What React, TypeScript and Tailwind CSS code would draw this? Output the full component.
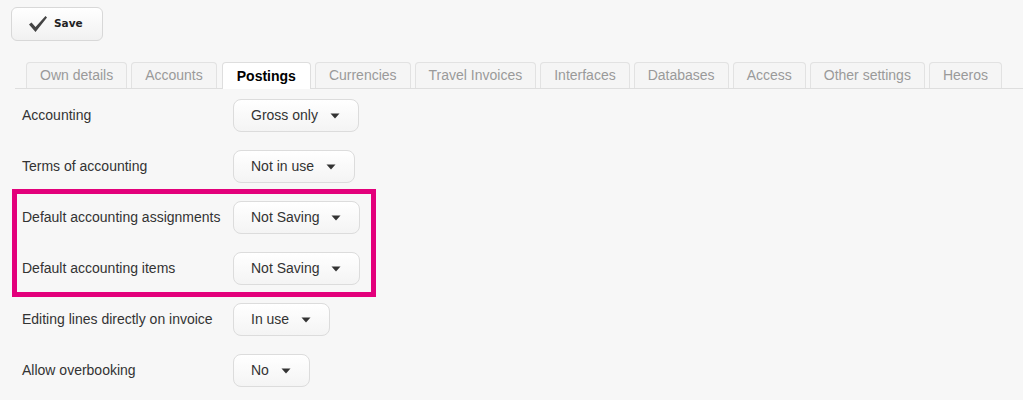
import React from "react";

interface Setting {
  label: string;
  value: string;
}

const tabs = [
  "Own details",
  "Accounts",
  "Postings",
  "Currencies",
  "Travel Invoices",
  "Interfaces",
  "Databases",
  "Access",
  "Other settings",
  "Heeros",
];

const before: Setting[] = [
  { label: "Accounting", value: "Gross only" },
  { label: "Terms of accounting", value: "Not in use" },
];

const highlighted: Setting[] = [
  { label: "Default accounting assignments", value: "Not Saving" },
  { label: "Default accounting items", value: "Not Saving" },
];

const after: Setting[] = [
  { label: "Editing lines directly on invoice", value: "In use" },
  { label: "Allow overbooking", value: "No" },
];

const Select: React.FC<{ value: string }> = ({ value }) => (
  <button className="flex h-[33px] items-center gap-[12px] rounded-[8px] border border-[#dcdcdc] bg-gradient-to-b from-white to-[#f4f4f4] pl-[17px] pr-[18px] text-[14px] text-[#333]">
    <span>{value}</span>
    <svg width="10" height="6" viewBox="0 0 10 6">
      <path d="M0.5 0.5h9L5 5.5z" fill="#333" />
    </svg>
  </button>
);

const Row: React.FC<{ setting: Setting }> = ({ setting }) => (
  <div className="flex items-center">
    <div className="w-[211px] text-[14px] text-[#333]">{setting.label}</div>
    <Select value={setting.value} />
  </div>
);

export default function App() {
  return (
    <div
      className="min-h-[400px] bg-[#f7f7f7] pt-[7px]"
      style={{ fontFamily: '"Liberation Sans", Arial, sans-serif' }}
    >
      <div className="pl-[11px]">
        <button className="flex h-[34px] w-[92px] items-center rounded-[6px] border border-[#d8d8d8] bg-gradient-to-b from-white to-[#f1f1f1] pl-[16px]">
          <svg width="20" height="18" viewBox="0 0 20 18">
            <path
              d="M1 9.5 L3.5 7.5 L7.5 12 L17.5 1 L19 2.5 L7.5 17 Z"
              fill="#444"
            />
          </svg>
          <span
            className="ml-[6px] text-[10.5px] font-bold text-[#222]"
            style={{ fontFamily: '"DejaVu Sans", Verdana, sans-serif' }}
          >
            Save
          </span>
        </button>
      </div>

      {/* tab strip */}
      <div className="ml-[15px] mt-[21px] flex gap-[4px] border-b border-[#dedede] pl-[11px]">
        {tabs.map((t) => {
          const active = t === "Postings";
          return (
            <div
              key={t}
              className={
                active
                  ? "-mb-px ml-[1px] flex h-[27px] items-center rounded-t-[4px] border border-b-0 border-[#dedede] bg-white px-[14px] text-[14px] font-bold text-black"
                  : "flex h-[26px] items-center rounded-t-[4px] border border-b-0 border-[#e2e2e2] bg-[#f5f5f5] px-[13px] text-[14px] text-[#9a9a9a]"
              }
            >
              {t}
            </div>
          );
        })}
      </div>

      <div className="flex flex-col gap-[18px] pl-[22px] pt-[10px]">
        {before.map((s) => (
          <Row key={s.label} setting={s} />
        ))}
        <div className="-my-[12px] -ml-[10px] flex w-[364px] flex-col gap-[18px] border-[5px] border-[#e3007b] pb-[7px] pl-[5px] pt-[7px]">
          {highlighted.map((s) => (
            <Row key={s.label} setting={s} />
          ))}
        </div>
        {after.map((s) => (
          <Row key={s.label} setting={s} />
        ))}
      </div>
    </div>
  );
}
